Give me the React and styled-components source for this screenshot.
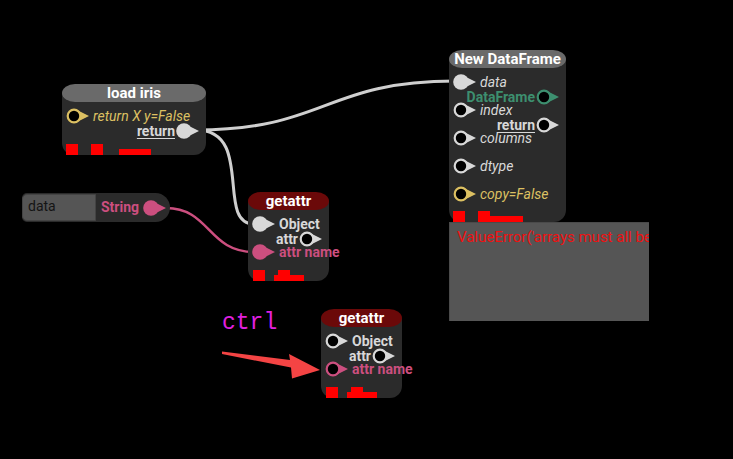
import React from "react";
import styled, { createGlobalStyle, css } from "styled-components";

const GREY = "#d8d8d8";
const YELLOW = "#dcc062";
const PINK = "#cc4f7f";
const GREEN = "#3d8f6f";

const GlobalStyle = createGlobalStyle`
  html, body {
    margin: 0;
    padding: 0;
    background: #000;
  }
  body {
    font-family: Roboto, "Noto Sans", sans-serif;
  }
`;

const Canvas = styled.div`
  position: relative;
  width: 733px;
  height: 459px;
  background: #000;
  overflow: hidden;
`;

const WireLayer = styled.svg`
  position: absolute;
  left: 0;
  top: 0;
  width: 733px;
  height: 459px;
  z-index: ${(p) => p.$z || 0};
  pointer-events: none;
`;

const Node = styled.div`
  position: absolute;
  left: ${(p) => p.$x}px;
  top: ${(p) => p.$y}px;
  width: ${(p) => p.$w}px;
  z-index: 1;
`;

const Header = styled.div`
  position: relative;
  z-index: 1;
  height: 18px;
  line-height: 18px;
  border-radius: 13px / 9px;
  background: ${(p) => (p.$tone === "red" ? "#6b0909" : "#6a6a6a")};
  color: #fff;
  font-size: 15px;
  font-weight: 700;
  text-align: center;
  white-space: nowrap;
`;

const Body = styled.div`
  margin-top: -9px;
  padding: 15px 7px 0 4px;
  background: #2b2b2b;
  border-radius: 0 0 12px 12px;
`;

const Ports = styled.div`
  display: grid;
  grid-template-columns: minmax(0, 1fr);
`;

const Column = styled.div`
  grid-area: 1 / 1;
  min-width: 0;
  display: flex;
  flex-direction: column;
  gap: 12px;
  align-items: ${(p) => (p.$out ? "flex-end" : "flex-start")};
  padding-top: ${(p) => (p.$out ? 15 : 0)}px;
`;

const Row = styled.div`
  height: 16px;
  display: flex;
  align-items: center;
  gap: ${(p) => (p.$out ? 1 : 4)}px;
`;

const Label = styled.span`
  font-size: 14px;
  line-height: 13px;
  white-space: nowrap;
  color: ${(p) => p.$color || GREY};
  font-style: ${(p) => (p.$italic ? "italic" : "normal")};
  font-weight: ${(p) => (p.$bold ? 700 : 400)};
  ${(p) =>
    p.$underline &&
    css`
      text-decoration: underline;
      text-underline-offset: 2px;
    `}
`;

const Footer = styled.div`
  display: flex;
  align-items: flex-end;
  height: 11px;
  margin-top: ${(p) => p.$space}px;
`;

const Mark = styled.div`
  flex: none;
  width: 12px;
  height: 11px;
  background: #ff0000;
  margin-left: ${(p) => p.$left || 0}px;
`;

const Bar = styled.div`
  flex: none;
  height: 6px;
  width: ${(p) => p.$w}px;
  background: #ff0000;
  margin-left: ${(p) => p.$left}px;
`;

const StringNode = styled.div`
  position: absolute;
  left: 22px;
  top: 193px;
  height: 29px;
  width: 148px;
  display: flex;
  align-items: center;
  background: #2b2b2b;
  border-radius: 5px 15px 15px 5px;
  z-index: 1;
`;

const TextBox = styled.div`
  align-self: stretch;
  width: 74px;
  box-sizing: border-box;
  margin: 1px 5px 1px 0;
  padding: 2px 5px;
  background: #555;
  border: 1px solid #444;
  border-radius: 5px 0 0 5px;
  color: #141414;
  font-size: 14px;
  line-height: 18px;
`;

const PortSlot = styled.span`
  display: flex;
  margin-left: 4px;
`;

const ErrorPanel = styled.div`
  position: absolute;
  left: 449px;
  top: 222px;
  width: 200px;
  height: 99px;
  box-sizing: border-box;
  padding: 5px 7px;
  background: #555555;
  border-left: 1px solid #4a4a4a;
  border-top: 1px solid #4a4a4a;
  overflow: hidden;
  white-space: nowrap;
  color: #ee1111;
  font-size: 15px;
  line-height: 18px;
  z-index: 1;
`;

const Note = styled.div`
  position: absolute;
  left: 222px;
  top: 309px;
  color: #e020e0;
  font-family: "Liberation Mono", "Courier New", monospace;
  font-size: 23px;
  line-height: 28px;
`;

function Port({ color, filled }) {
  return (
    <svg width="23" height="16" viewBox="0 0 23 16" style={{ flex: "none" }}>
      <path d="M11 2 L23 8 L11 14 Z" fill={color} />
      {filled ? (
        <circle cx="8" cy="8" r="7.8" fill={color} />
      ) : (
        <circle cx="8" cy="8" r="6.3" fill="#000" stroke={color} strokeWidth="2.2" />
      )}
    </svg>
  );
}

function InPort({ label, color = GREY, filled, italic, bold }) {
  return (
    <Row>
      <Port color={color} filled={filled} />
      <Label $color={color} $italic={italic} $bold={bold}>
        {label}
      </Label>
    </Row>
  );
}

function OutPort({ label, color = GREY, filled, underline }) {
  return (
    <Row $out>
      <Label $color={color} $bold $underline={underline}>
        {label}
      </Label>
      <Port color={color} filled={filled} />
    </Row>
  );
}

function GetAttr({ x, y, objectFilled, nameFilled }) {
  return (
    <Node $x={x} $y={y} $w={81}>
      <Header $tone="red">getattr</Header>
      <Body>
        <Ports>
          <Column>
            <InPort label="Object" bold filled={objectFilled} />
            <InPort label="attr name" bold color={PINK} filled={nameFilled} />
          </Column>
          <Column $out>
            <OutPort label="attr" />
          </Column>
        </Ports>
        <Footer $space={10}>
          <Mark $left={1} />
          <Mark $left={13} />
          <Bar $w={30} $left={-16} />
        </Footer>
      </Body>
    </Node>
  );
}

export default function App() {
  return (
    <Canvas>
      <GlobalStyle />
      <WireLayer viewBox="0 0 733 459">
        <g fill="none" strokeLinecap="round">
          <path d="M196 130 C325 130 325 81 455 81" stroke="#cfcfcf" strokeWidth="3" />
          <path d="M196 130 C255 130 215 224 254 224" stroke="#cfcfcf" strokeWidth="3" />
          <path d="M166 208 C210 208 208 252 254 252" stroke={PINK} strokeWidth="2.5" />
        </g>
      </WireLayer>

      <Node $x={62} $y={84} $w={144}>
        <Header>load iris</Header>
        <Body>
          <Ports>
            <Column>
              <InPort label="return X y=False" color={YELLOW} italic />
            </Column>
            <Column $out>
              <OutPort label="return" underline filled />
            </Column>
          </Ports>
          <Footer $space={5}>
            <Mark />
            <Mark $left={13} />
            <Bar $w={32} $left={16} />
          </Footer>
        </Body>
      </Node>

      <Node $x={449} $y={50} $w={117}>
        <Header>New DataFrame</Header>
        <Body>
          <Ports>
            <Column>
              <InPort label="data" italic filled />
              <InPort label="index" italic />
              <InPort label="columns" italic />
              <InPort label="dtype" italic />
              <InPort label="copy=False" color={YELLOW} italic />
            </Column>
            <Column $out>
              <OutPort label="DataFrame" color={GREEN} />
              <OutPort label="return" underline />
            </Column>
          </Ports>
          <Footer $space={9}>
            <Mark />
            <Mark $left={13} />
            <Bar $w={33} $left={0} />
          </Footer>
        </Body>
      </Node>

      <ErrorPanel>ValueError('arrays must all be same length')</ErrorPanel>

      <StringNode>
        <TextBox>data</TextBox>
        <Label $color={PINK} $bold>
          String
        </Label>
        <PortSlot>
          <Port color={PINK} filled />
        </PortSlot>
      </StringNode>

      <GetAttr x={248} y={192} objectFilled nameFilled />
      <GetAttr x={321} y={309} />

      <Note>ctrl</Note>

      <WireLayer viewBox="0 0 733 459" $z={2}>
        <path
          d="M222 351.5 L290 360 L289 354 L320 370 L292 378.5 L291 367.5 L222 354 Z"
          fill="#f44444"
        />
      </WireLayer>
    </Canvas>
  );
}
